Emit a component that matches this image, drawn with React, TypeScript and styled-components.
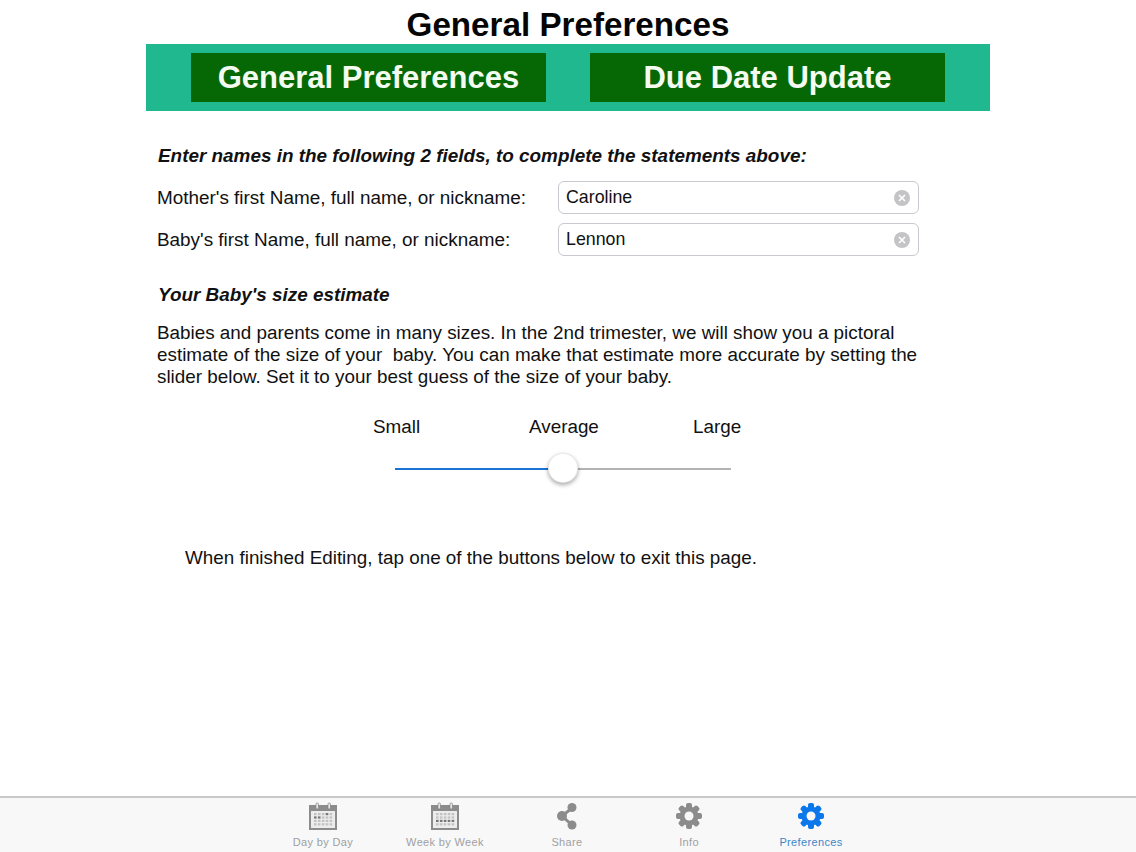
import React from "react";
import styled, { createGlobalStyle } from "styled-components";

const Global = createGlobalStyle`
  html, body { margin: 0; padding: 0; background: #fff; }
  body { font-family: "Liberation Sans", Arial, sans-serif; color: #111; }
`;

const Page = styled.div`
  width: 1136px;
  height: 852px;
  display: flex;
  flex-direction: column;
  overflow: hidden;
`;

const Main = styled.main`
  flex: 1;
  display: flex;
  flex-direction: column;
  align-items: center;
`;

const Title = styled.h1`
  margin: 0;
  height: 44px;
  font-size: 33.2px;
  line-height: 50px;
  font-weight: 700;
  color: #050505;
`;

const Banner = styled.div`
  width: 844px;
  height: 67px;
  box-sizing: border-box;
  padding: 9px 45px;
  background: #20b98f;
  display: flex;
  justify-content: space-between;
`;

const BannerButton = styled.div`
  width: 355px;
  height: 49px;
  background: #056805;
  color: #f4fbf0;
  font-size: 31px;
  font-weight: 700;
  line-height: 49px;
  text-align: center;
`;

const Content = styled.div`
  width: 844px;
  box-sizing: border-box;
  padding: 34px 0 0 11px;
  display: flex;
  flex-direction: column;
`;

const Heading = styled.div`
  font-size: 18.9px;
  line-height: 22px;
  font-weight: 700;
  font-style: italic;
  color: #111;
  margin-left: 1px;
`;

const FieldRow = styled.div<{ $first?: boolean }>`
  display: flex;
  align-items: center;
  height: 33px;
  margin-top: ${(p) => (p.$first ? "14px" : "9px")};
  font-size: 18.9px;
`;

const FieldLabel = styled.label`
  width: 401px;
  flex: none;
`;

const Field = styled.div`
  width: 361px;
  height: 33px;
  box-sizing: border-box;
  border: 1px solid #c9c9cf;
  border-radius: 6px;
  padding: 0 8px 0 7px;
  display: flex;
  align-items: center;
  justify-content: space-between;
  font-size: 17.8px;
`;

const ClearIcon = styled.svg`
  width: 16px;
  height: 16px;
  flex: none;
`;

const SizeHeading = styled(Heading)`
  margin-top: 28px;
`;

const Paragraph = styled.p`
  margin: 16px 0 0;
  width: 790px;
  font-size: 18.85px;
  line-height: 22px;
  color: #111;
  white-space: pre-wrap;
`;

const SliderBlock = styled.div`
  width: 380px;
  margin: 28px 0 0 216px;
  display: flex;
  flex-direction: column;
`;

const SliderLabels = styled.div`
  display: flex;
  font-size: 18.85px;
  line-height: 22px;
`;

const SliderLabel = styled.span<{ $w: number }>`
  width: ${(p) => p.$w}px;
`;

const Track = styled.div`
  position: relative;
  width: 336px;
  height: 2px;
  margin: 30px 0 0 22px;
  background: #b4b4b6;
`;

const TrackFill = styled.div`
  position: absolute;
  left: 0;
  top: 0;
  height: 2px;
  background: #1a73d4;
`;

const Thumb = styled.div`
  position: absolute;
  top: -15px;
  width: 30px;
  height: 30px;
  margin-left: -15px;
  border-radius: 50%;
  background: #fff;
  border: 1px solid rgba(0, 0, 0, 0.08);
  box-sizing: border-box;
  box-shadow: 0 2px 4px rgba(0, 0, 0, 0.35);
`;

const Finish = styled.div`
  margin: 77px 0 0 28px;
  font-size: 18.85px;
  line-height: 22px;
`;

const TabBar = styled.nav`
  height: 56px;
  box-sizing: border-box;
  border-top: 2px solid #c8c8ca;
  background: #f8f8f9;
  padding-left: 262px;
  display: flex;
`;

const Tab = styled.div<{ $active?: boolean }>`
  width: 122px;
  display: flex;
  flex-direction: column;
  align-items: center;
  padding-top: 3px;
  color: ${(p) => (p.$active ? "#3d86c6" : "#a0a0a2")};
  font-size: 11px;
  letter-spacing: 0.35px;
  line-height: 14px;
`;

const TabIcon = styled.svg`
  width: 32px;
  height: 30px;
  margin-bottom: 4px;
  flex: none;
`;

const Calendar = ({ marks }: { marks: number[] }) => (
  <TabIcon viewBox="0 0 32 30">
    <rect x="2" y="4" width="28" height="25" fill="#8c8c8c" />
    <rect x="4" y="10" width="24" height="17" fill="#ececec" />
    <rect x="9" y="2" width="2.4" height="6" rx="1" fill="#eee" stroke="#808080" strokeWidth="0.7" />
    <rect x="21" y="2" width="2.4" height="6" rx="1" fill="#eee" stroke="#808080" strokeWidth="0.7" />
    {[0, 1, 2, 3].map((r) =>
      [0, 1, 2, 3, 4].map((c) => (
        <rect
          key={`${r}-${c}`}
          x={7 + c * 3.9}
          y={12 + r * 3.4}
          width="2.6"
          height="2.2"
          fill={marks.includes(r * 5 + c) ? "#777" : "#c2c2c2"}
        />
      ))
    )}
  </TabIcon>
);

const Gear = ({ color }: { color: string }) => {
  const teeth = [0, 45, 90, 135];
  return (
    <TabIcon viewBox="0 0 32 30">
      {teeth.map((a) => (
        <rect key={a} x="13" y="2" width="6" height="26" rx="2" fill={color} transform={`rotate(${a} 16 15)`} />
      ))}
      <circle cx="16" cy="15" r="9.5" fill={color} />
      <circle cx="16" cy="15" r="4.5" fill="#f8f8f9" />
    </TabIcon>
  );
};

const Share = () => (
  <TabIcon viewBox="0 0 32 30">
    <path d="M21 7 L11 15 L21 24" fill="none" stroke="#8c8c8c" strokeWidth="3" />
    <circle cx="21" cy="6.5" r="4.5" fill="#8c8c8c" />
    <circle cx="11" cy="15" r="5" fill="#8c8c8c" />
    <circle cx="21" cy="24" r="4.5" fill="#8c8c8c" />
  </TabIcon>
);

const Clear = () => (
  <ClearIcon viewBox="0 0 16 16">
    <circle cx="8" cy="8" r="8" fill="#c4c4c6" />
    <path d="M5 5 L11 11 M11 5 L5 11" stroke="#fff" strokeWidth="1.6" />
  </ClearIcon>
);

export default function App() {
  return (
    <Page>
      <Global />
      <Main>
        <Title>General Preferences</Title>
        <Banner>
          <BannerButton>General Preferences</BannerButton>
          <BannerButton>Due Date Update</BannerButton>
        </Banner>
        <Content>
          <Heading>Enter names in the following 2 fields, to complete the statements above:</Heading>
          <FieldRow $first>
            <FieldLabel>Mother's first Name, full name, or nickname:</FieldLabel>
            <Field>Caroline<Clear /></Field>
          </FieldRow>
          <FieldRow>
            <FieldLabel>Baby's first Name, full name, or nickname:</FieldLabel>
            <Field>Lennon<Clear /></Field>
          </FieldRow>
          <SizeHeading>Your Baby's size estimate</SizeHeading>
          <Paragraph>
            Babies and parents come in many sizes. In the 2nd trimester, we will show you a pictoral
            {"\n"}estimate of the size of your  baby. You can make that estimate more accurate by setting the
            {"\n"}slider below. Set it to your best guess of the size of your baby.
          </Paragraph>
          <SliderBlock>
            <SliderLabels>
              <SliderLabel $w={156}>Small</SliderLabel>
              <SliderLabel $w={164}>Average</SliderLabel>
              <SliderLabel $w={60}>Large</SliderLabel>
            </SliderLabels>
            <Track>
              <TrackFill style={{ width: "50%" }} />
              <Thumb style={{ left: "50%" }} />
            </Track>
          </SliderBlock>
          <Finish>When finished Editing, tap one of the buttons below to exit this page.</Finish>
        </Content>
      </Main>
      <TabBar>
        <Tab><Calendar marks={[3, 5, 6]} />Day by Day</Tab>
        <Tab><Calendar marks={[10, 11, 12, 13, 14]} />Week by Week</Tab>
        <Tab><Share />Share</Tab>
        <Tab><Gear color="#8c8c8c" />Info</Tab>
        <Tab $active><Gear color="#0a77ea" />Preferences</Tab>
      </TabBar>
    </Page>
  );
}
